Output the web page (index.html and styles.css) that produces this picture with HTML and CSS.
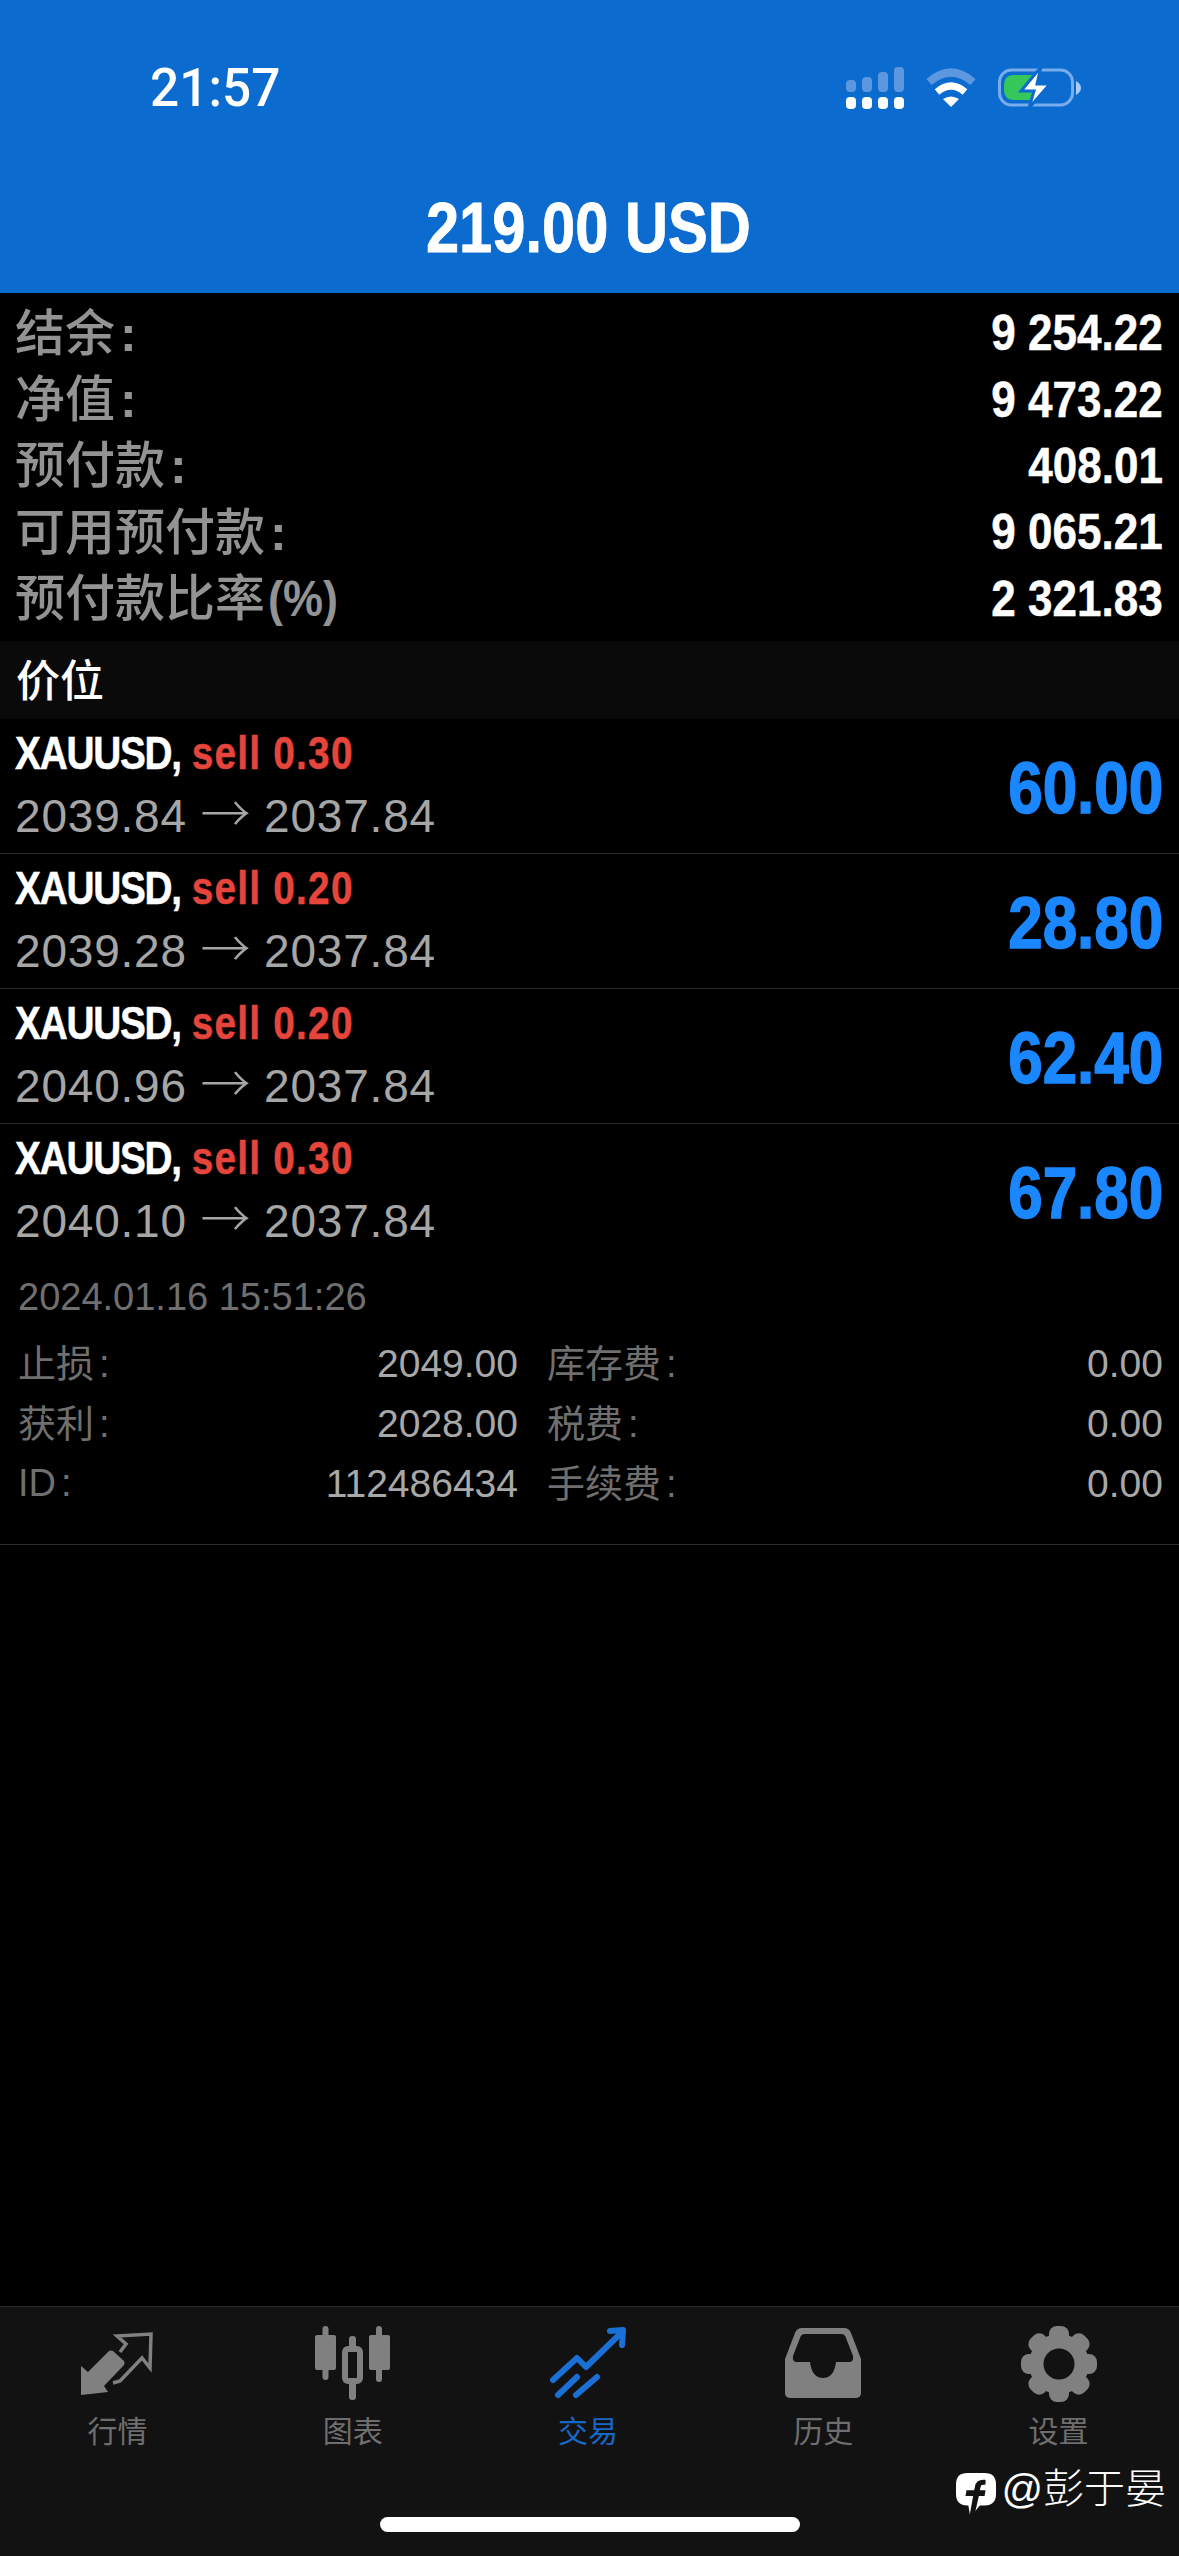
FILE: index.html
```html
<!DOCTYPE html>
<html lang="zh-CN">
<head>
    <meta charset="UTF-8">
    <title>交易</title>
    <link rel="stylesheet" href="styles.css">
</head>
<body>
    <div class="header-bar">
        <div class="status-bar">
            <span class="clock">21:57</span>
            <div class="status-icons">
                <svg class="signal" width="58" height="42" viewBox="0 0 58 42">
                    <g fill="#5c97e0">
                        <rect x="0" y="13" width="10" height="12" rx="4"/>
                        <rect x="16" y="10" width="10" height="15" rx="4"/>
                        <rect x="32" y="5" width="10" height="20" rx="4"/>
                        <rect x="48" y="0" width="10" height="25" rx="4"/>
                    </g>
                    <g fill="#fff">
                        <rect x="0" y="30" width="10" height="12" rx="4"/>
                        <rect x="16" y="30" width="10" height="12" rx="4"/>
                        <rect x="32" y="30" width="10" height="12" rx="4"/>
                        <rect x="48" y="30" width="10" height="12" rx="4"/>
                    </g>
                </svg>
                <svg class="wifi" width="50" height="40" viewBox="0 0 50 40">
                    <path d="M3 14 Q25 -5 47 14" fill="none" stroke="#5c97e0" stroke-width="8"/>
                    <path d="M11 24 Q25 12 39 24" fill="none" stroke="#fff" stroke-width="7"/>
                    <path d="M17 31 Q25 26 33 31 L25 39 Z" fill="#fff"/>
                </svg>
                <svg class="battery" width="84" height="42" viewBox="0 0 84 42">
                    <rect x="1.5" y="3" width="73" height="35" rx="12" fill="none" stroke="#78aceb" stroke-width="3"/>
                    <path d="M78 14 Q83 17 83 21 Q83 25 78 28 Z" fill="#a9caf2"/>
                    <path d="M6 19 Q6 8 16 8 H34 V33 H16 Q6 33 6 22 Z" fill="#35c759"/>
                    <path d="M43 0 L23 24 H36 L31 41 L52 17 H39 Z" fill="#fff" stroke="#0b6bcf" stroke-width="3"/>
                </svg>
            </div>
        </div>
        <h1><span class="squeeze">219.00 USD</span></h1>
    </div>

    <div class="summary">
        <div class="summary-row"><span>结余<i class="colon">:</i></span><b>9 254.22</b></div>
        <div class="summary-row"><span>净值<i class="colon">:</i></span><b>9 473.22</b></div>
        <div class="summary-row"><span>预付款<i class="colon">:</i></span><b>408.01</b></div>
        <div class="summary-row"><span>可用预付款<i class="colon">:</i></span><b>9 065.21</b></div>
        <div class="summary-row"><span>预付款比率<i class="percent">(%)</i></span><b>2 321.83</b></div>
    </div>

    <div class="section-title">价位</div>

    <div class="position">
        <div class="position-info">
            <p class="symbol"><span class="squeeze-left"><u>XAUUSD,</u> <em>sell 0.30</em></span></p>
            <p class="prices">2039.84 <span class="arrow">→</span> 2037.84</p>
        </div>
        <span class="profit">60.00</span>
    </div>
    <div class="position">
        <div class="position-info">
            <p class="symbol"><span class="squeeze-left"><u>XAUUSD,</u> <em>sell 0.20</em></span></p>
            <p class="prices">2039.28 <span class="arrow">→</span> 2037.84</p>
        </div>
        <span class="profit">28.80</span>
    </div>
    <div class="position">
        <div class="position-info">
            <p class="symbol"><span class="squeeze-left"><u>XAUUSD,</u> <em>sell 0.20</em></span></p>
            <p class="prices">2040.96 <span class="arrow">→</span> 2037.84</p>
        </div>
        <span class="profit">62.40</span>
    </div>
    <div class="position open">
        <div class="position-info">
            <p class="symbol"><span class="squeeze-left"><u>XAUUSD,</u> <em>sell 0.30</em></span></p>
            <p class="prices">2040.10 <span class="arrow">→</span> 2037.84</p>
        </div>
        <span class="profit">67.80</span>
    </div>

    <div class="details">
        <p class="open-time">2024.01.16 15:51:26</p>
        <div class="details-grid">
            <div class="detail"><span>止损<i class="colon">:</i></span><b>2049.00</b></div>
            <div class="detail"><span>库存费<i class="colon">:</i></span><b>0.00</b></div>
            <div class="detail"><span>获利<i class="colon">:</i></span><b>2028.00</b></div>
            <div class="detail"><span>税费<i class="colon">:</i></span><b>0.00</b></div>
            <div class="detail"><span class="latin">ID<i class="colon">:</i></span><b>112486434</b></div>
            <div class="detail"><span>手续费<i class="colon">:</i></span><b>0.00</b></div>
        </div>
    </div>

    <div class="tab-bar">
        <a href="#" class="tab">
            <svg width="90" height="85" viewBox="3 0 90 85">
                <path d="M11 46 L18 52 L39 31 Q41 30 43 31 L54 41 Q55 43 54 45 L34 66 L38 72 L11 75 Z" fill="#808080"/>
                <path d="M50 32 L56 24 L47 16 L81 14 L80 48 L72 38 L50 61 L43 63" fill="none" stroke="#808080" stroke-width="3.5"/>
            </svg>
            <span>行情</span>
        </a>
        <a href="#" class="tab">
            <svg width="90" height="85" viewBox="3 0 90 85">
                <g fill="#808080">
                    <rect x="17.5" y="6" width="6" height="54" rx="3"/>
                    <rect x="10" y="15" width="21" height="35" rx="2"/>
                    <rect x="71" y="6" width="6" height="56" rx="3"/>
                    <rect x="64" y="15" width="21" height="35" rx="2"/>
                    <rect x="44" y="16" width="7" height="64" rx="3"/>
                </g>
                <rect x="40" y="29" width="15" height="32" rx="3" fill="#121212" stroke="#808080" stroke-width="6"/>
            </svg>
            <span>图表</span>
        </a>
        <a href="#" class="tab active">
            <svg width="90" height="85" viewBox="-2 0 90 85">
                <g fill="none" stroke="#1a70d4" stroke-width="6" stroke-linecap="round" stroke-linejoin="round">
                    <path d="M8 60 L32 38 L41 47 L76 13"/>
                    <path d="M13 75 L32 57"/>
                    <path d="M31 75 L52 57"/>
                    <path d="M65 11 L78 10 L77 25"/>
                </g>
            </svg>
            <span>交易</span>
        </a>
        <a href="#" class="tab">
            <svg width="90" height="85" viewBox="-7 -8 90 85">
                <path fill-rule="evenodd" fill="#808080" d="M17 0 H59 Q64 0 66 5 L76 31 V65 Q76 70 70 70 H6 Q0 70 0 65 V31 L10 5 Q12 0 17 0 Z M20 6 Q16 6 15 10 L8 28 Q7 34 12 34 H25 Q27 50 38 50 Q49 50 51 34 H64 Q69 34 68 28 L61 10 Q60 6 56 6 Z"/>
            </svg>
            <span>历史</span>
        </a>
        <a href="#" class="tab">
            <svg width="90" height="85" viewBox="-8 -6 90 85">
                <g fill="#808080">
                    <circle cx="38" cy="38" r="30"/>
                    <rect x="28" y="0" width="20" height="76" rx="8"/>
                    <rect x="28" y="0" width="20" height="76" rx="8" transform="rotate(45 38 38)"/>
                    <rect x="28" y="0" width="20" height="76" rx="8" transform="rotate(90 38 38)"/>
                    <rect x="28" y="0" width="20" height="76" rx="8" transform="rotate(135 38 38)"/>
                </g>
                <circle cx="38" cy="38" r="15.5" fill="#121212"/>
            </svg>
            <span>设置</span>
        </a>
        <div class="watermark">
            <svg width="40" height="46" viewBox="0 0 42 46">
                <path d="M12 0 H30 Q42 0 42 12 V22 Q42 34 30 34 H25 L15 46 L13 34 H12 Q0 34 0 22 V12 Q0 0 12 0 Z" fill="#fff"/>
                <path d="M31 7 Q21 6 20 14 L19 18 H11 L10 24 H18 L14 46 H19 L24 24 H30 L31 18 H25 L26 14 Q26 12 31 12 Z" fill="#121212"/>
            </svg>
            <span>@彭于晏</span>
        </div>
        <div class="home-bar"></div>
    </div>
</body>
</html>
```

FILE: styles.css
```css
body {
    margin: 0;
    width: 1179px;
    height: 2556px;
    overflow: hidden;
    display: flex;
    flex-direction: column;
    background-color: #000;
    color: #fff;
    font-family: "Liberation Sans", "Noto Sans CJK SC", sans-serif;
}
p {
    margin: 0;
}
.header-bar {
    background-color: #0b6bcf;
    height: 293px;
    flex-shrink: 0;
    box-sizing: border-box;
    padding-top: 58px;
}
.status-bar {
    display: flex;
    justify-content: space-between;
    align-items: center;
    height: 60px;
    padding: 0 97px 0 150px;
}
.clock {
    font-family: Roboto, sans-serif;
    font-weight: 500;
    font-size: 53px;
    transform: scaleX(0.97);
    transform-origin: left;
}
.status-icons {
    display: flex;
    align-items: center;
    gap: 22px;
}
.header-bar h1 {
    margin: 0;
    padding: 70px 3px 0 0;
    text-align: center;
    font-size: 71px;
    line-height: 80px;
}
.squeeze {
    display: inline-block;
    transform: scaleX(0.84);
    -webkit-text-stroke: 0.8px #fff;
}
.summary {
    padding: 6px 16px 10px 15px;
}
.summary-row {
    display: flex;
    justify-content: space-between;
    align-items: center;
    height: 66.4px;
    font-size: 50px;
    font-weight: 500;
    color: #939393;
}
.summary-row span {
    padding-bottom: 7px;
}
.summary-row b {
    padding-top: 2px;
    color: #fff;
    font-size: 50px;
    transform: scaleX(0.88);
    transform-origin: right;
    -webkit-text-stroke: 0.5px #fff;
}
.colon {
    font-style: normal;
    margin-left: 5px;
}
.summary-row .colon {
    font-weight: bold;
}
.percent {
    display: inline-block;
    margin-left: 3px;
    font-style: normal;
    font-weight: bold;
    transform: scaleX(0.9);
    transform-origin: left;
}
.section-title {
    background-color: #0a0a0a;
    height: 78px;
    line-height: 81px;
    padding-left: 16px;
    font-size: 44px;
    font-weight: 500;
}
.position {
    display: flex;
    justify-content: space-between;
    align-items: center;
    height: 134px;
    padding: 0 16px 0 15px;
    border-bottom: 1px solid #2a2a2a;
}
.position.open {
    border-bottom: none;
}
.position-info {
    display: flex;
    flex-direction: column;
    gap: 3px;
    padding-bottom: 2px;
}
.symbol {
    font-size: 47px;
    font-weight: bold;
    line-height: 54px;
}
.squeeze-left {
    display: inline-block;
    transform: scaleX(0.825);
    transform-origin: left;
    white-space: nowrap;
    -webkit-text-stroke: 0.5px currentColor;
}
.symbol u {
    text-decoration: none;
    letter-spacing: -1.5px;
}
.symbol em {
    font-style: normal;
    letter-spacing: 1.5px;
    color: #e5453a;
}
.prices {
    font-size: 46px;
    line-height: 54px;
    letter-spacing: 0.8px;
    color: #a6a6a6;
}
.arrow {
    font-family: "Noto Sans CJK SC", sans-serif;
    font-size: 50px;
    font-weight: 300;
    letter-spacing: 0;
}
.profit {
    padding-top: 4px;
    font-size: 72px;
    font-weight: bold;
    color: #1a87ff;
    transform: scaleX(0.86);
    transform-origin: right;
    -webkit-text-stroke: 1.5px #1a87ff;
}
.details {
    height: 287px;
    box-sizing: border-box;
    padding: 14px 16px 0 18px;
    border-bottom: 1px solid #2c2c2c;
    flex-shrink: 0;
}
.open-time {
    font-size: 38px;
    line-height: 50px;
    color: #6f6f6f;
}
.details-grid {
    display: grid;
    grid-template-columns: 500px 616px;
    column-gap: 29px;
    grid-auto-rows: 60px;
    margin-top: 12px;
}
.detail {
    display: flex;
    justify-content: space-between;
    align-items: center;
    font-size: 38px;
    color: #6f6f6f;
}
.detail span {
    padding-bottom: 7px;
}
.detail .latin {
    padding-bottom: 0;
}
.detail b {
    font-size: 39px;
    font-weight: normal;
    color: #a8a8a8;
}
.tab-bar {
    position: relative;
    margin-top: auto;
    height: 250px;
    box-sizing: border-box;
    flex-shrink: 0;
    display: flex;
    background-color: #121212;
    border-top: 1px solid #2a2a2a;
    padding: 13px 3px 0 0;
}
.tab {
    flex: 1;
    display: flex;
    flex-direction: column;
    align-items: center;
    gap: 9px;
    height: 130px;
    text-decoration: none;
    font-size: 30px;
    line-height: 36px;
    color: #6e6e6e;
}
.tab.active {
    color: #1668c7;
}
.watermark {
    position: absolute;
    right: 13px;
    top: 165px;
    display: flex;
    align-items: flex-start;
    gap: 5px;
    font-size: 41px;
    line-height: 46px;
    font-weight: 300;
}
.watermark span {
    margin-top: -6px;
}
.home-bar {
    position: absolute;
    left: 380px;
    top: 210px;
    width: 420px;
    height: 15px;
    border-radius: 8px;
    background-color: #fff;
}
```
